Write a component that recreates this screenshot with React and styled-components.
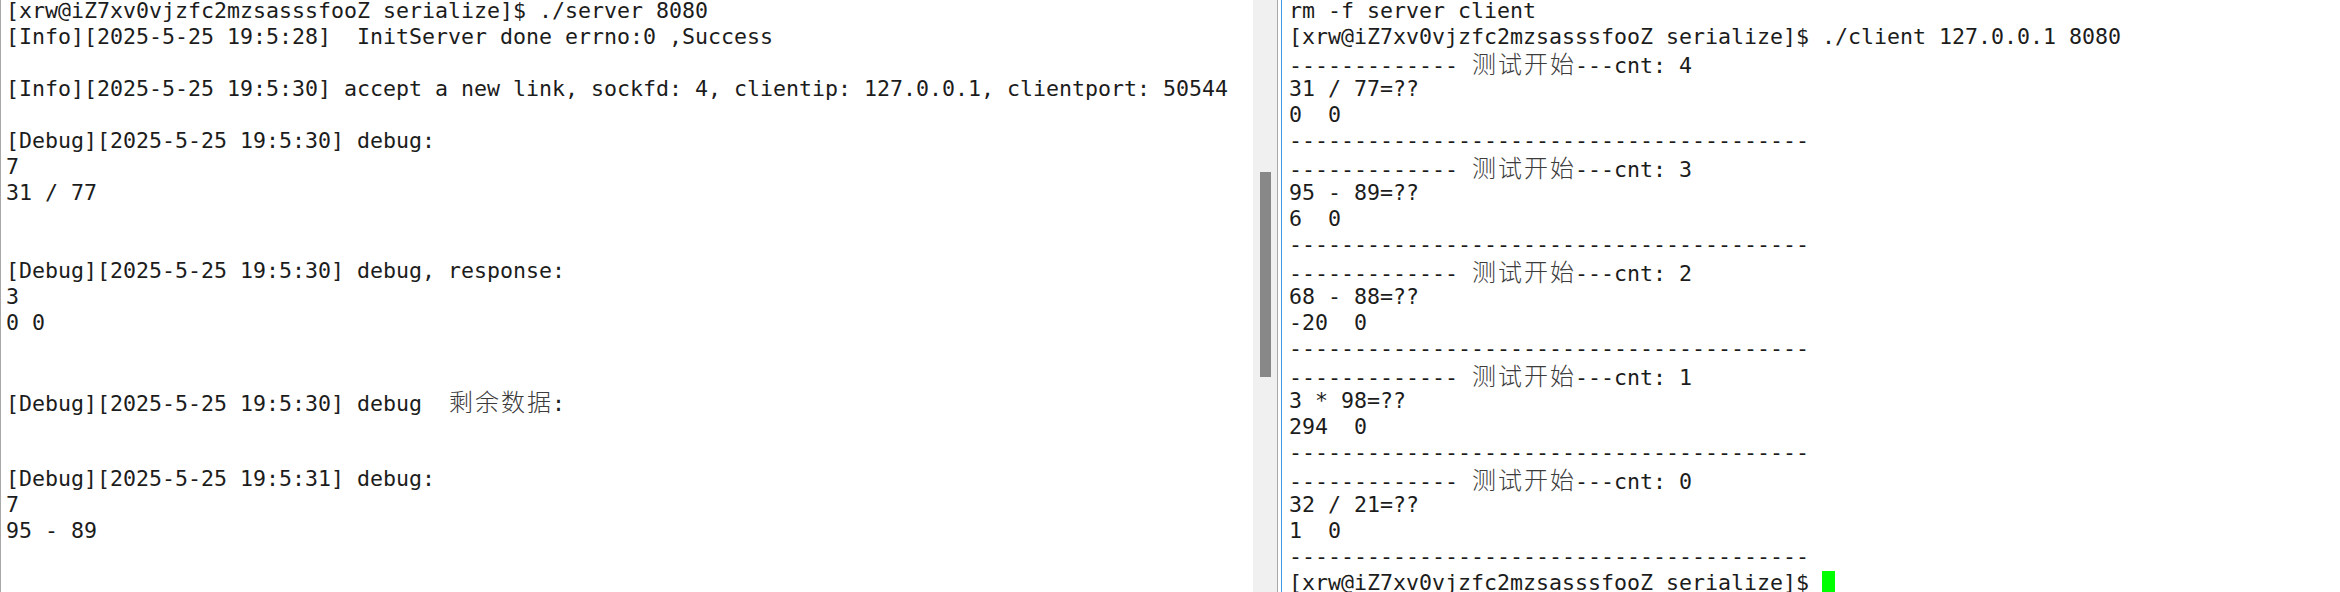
import React from "react";
import styled, { createGlobalStyle } from "styled-components";

const Global = createGlobalStyle`
  html, body { margin: 0; padding: 0; background: #ffffff; overflow: hidden; }
  #root { width: 2340px; height: 592px; }
`;

const Desktop = styled.div`
  display: flex;
  width: 2340px;
  height: 592px;
  background: #ffffff;
  overflow: hidden;
`;

const TermPane = styled.div`
  flex: ${(p) => (p.$grow ? "1 1 auto" : "0 0 auto")};
  width: ${(p) => (p.$width ? `${p.$width}px` : "auto")};
  box-sizing: border-box;
  height: 592px;
  overflow: hidden;
  background: #ffffff;
  border-left: 1px solid ${(p) => p.$edge};
  padding-left: ${(p) => p.$pad}px;
`;

const Screen = styled.div`
  margin-top: -2px;
  font-family: "DejaVu Sans Mono", monospace;
  font-size: 21.6px;
  color: #1c1c1c;
`;

const Row = styled.div`
  height: 26px;
  line-height: 26px;
  white-space: pre;
`;

const Han = styled.span`
  display: inline-block;
  width: 26px;
  text-align: center;
  font-family: "Noto Sans CJK SC", sans-serif;
  font-size: 24px;
  line-height: 26px;
  font-weight: 300;
  color: #3c3c3c;
`;

const Cursor = styled.span`
  display: inline-block;
  width: 13px;
  height: 24px;
  vertical-align: -5px;
  background: #00ff00;
`;

const ScrollTrack = styled.div`
  flex: 0 0 auto;
  width: 24px;
  height: 592px;
  background: #f0f0f0;
  border-right: 1px solid #a8a8a8;
  display: flex;
  flex-direction: column;
  align-items: center;
  padding-top: 172px;
  box-sizing: content-box;
`;

const Thumb = styled.div`
  width: 11px;
  height: 205px;
  background: #888888;
`;

const Gap = styled.div`
  flex: 0 0 auto;
  width: 3px;
`;

const CJK = /[\u3400-\u9fff\uff00-\uffef]/;

function renderText(text) {
  const out = [];
  let buf = "";
  [...text].forEach((ch, i) => {
    if (CJK.test(ch)) {
      if (buf) {
        out.push(buf);
        buf = "";
      }
      out.push(<Han key={i}>{ch}</Han>);
    } else {
      buf += ch;
    }
  });
  if (buf) out.push(buf);
  return out;
}

const DASHES = "-".repeat(40);
const head = (n) => `------------- 测试开始---cnt: ${n}`;
const PROMPT = "[xrw@iZ7xv0vjzfc2mzsasssfooZ serialize]$ ";

const serverLines = [
  PROMPT + "./server 8080",
  "[Info][2025-5-25 19:5:28]  InitServer done errno:0 ,Success",
  "",
  "[Info][2025-5-25 19:5:30] accept a new link, sockfd: 4, clientip: 127.0.0.1, clientport: 50544",
  "",
  "[Debug][2025-5-25 19:5:30] debug:",
  "7",
  "31 / 77",
  "",
  "",
  "[Debug][2025-5-25 19:5:30] debug, response:",
  "3",
  "0 0",
  "",
  "",
  "[Debug][2025-5-25 19:5:30] debug  剩余数据:",
  "",
  "",
  "[Debug][2025-5-25 19:5:31] debug:",
  "7",
  "95 - 89",
];

const clientLines = [
  "rm -f server client",
  PROMPT + "./client 127.0.0.1 8080",
  head(4),
  "31 / 77=??",
  "0  0",
  DASHES,
  head(3),
  "95 - 89=??",
  "6  0",
  DASHES,
  head(2),
  "68 - 88=??",
  "-20  0",
  DASHES,
  head(1),
  "3 * 98=??",
  "294  0",
  DASHES,
  head(0),
  "32 / 21=??",
  "1  0",
  DASHES,
];

function Terminal({ lines, cursorLine }) {
  return (
    <Screen>
      {lines.map((l, i) => (
        <Row key={i}>{l ? renderText(l) : " "}</Row>
      ))}
      {cursorLine !== undefined && (
        <Row>
          {cursorLine}
          <Cursor />
        </Row>
      )}
    </Screen>
  );
}

export default function App() {
  return (
    <>
      <Global />
      <Desktop>
        <TermPane $width={1253} $edge="#a8a8a8" $pad={5}>
          <Terminal lines={serverLines} />
        </TermPane>
        <ScrollTrack>
          <Thumb />
        </ScrollTrack>
        <Gap />
        <TermPane $grow $edge="#3a9ae8" $pad={7}>
          <Terminal lines={clientLines} cursorLine={PROMPT} />
        </TermPane>
      </Desktop>
    </>
  );
}
